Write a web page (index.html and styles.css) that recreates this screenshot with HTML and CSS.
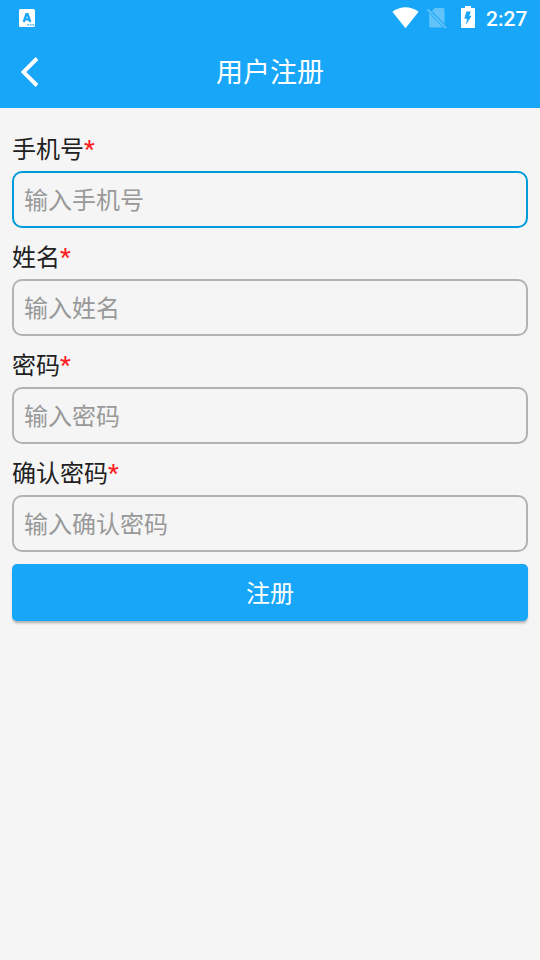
FILE: index.html
```html
<!DOCTYPE html>
<html lang="zh-CN">
<head>
<meta charset="utf-8">
<title>用户注册</title>
<link rel="stylesheet" href="styles.css">
</head>
<body>
<header class="top">
  <div class="status">
    <svg class="app-icon" width="16" height="18" viewBox="0 0 16 18">
      <rect width="16" height="18" rx="1.5" fill="#fff"/>
      <path d="M4.7 13 7.4 5.2H8.6L11.3 13M5.8 10.4h4.5" fill="none" stroke="#17a6f8" stroke-width="2.3"/>
      <path d="M8.3 15.2h1.6v1.4H8.3zM10.9 15.2h1.6v1.4h-1.6zM13.4 15.2H15v1.4h-1.6z" fill="#17a6f8"/>
    </svg>
    <svg class="wifi" width="27" height="22" viewBox="0 0 27 22">
      <path d="M13.5 21.2.4 4.7C8.2-1.3 18.8-1.3 26.6 4.7Z" fill="#fff"/>
    </svg>
    <svg class="sim" width="20" height="21" viewBox="0 0 20 21">
      <path d="M.7 1.5 19 20.2M7.5 0H16q1.5 0 1.5 1.5V16L5 3ZM2.2 5.3 16 19.5H4q-1.8 0-1.8-1.8Z" fill="#fff"/>
      <path d="M.7 1.5 19 20.2" stroke="#fff" stroke-width="1.8"/>
    </svg>
    <svg class="battery" width="14" height="22" viewBox="0 0 14 22">
      <path d="M4 0h6v2h3q1 0 1 1v18q0 1-1 1H1q-1 0-1-1V3q0-1 1-1h3Z" fill="#fff"/>
      <path d="M5.3 5.5H9.8L8.3 9.8H10.5L4.9 19 6.1 12.7H3.4Z" fill="#17a6f8"/>
    </svg>
    <span class="clock">2:27</span>
  </div>
  <div class="bar">
    <svg class="back" width="20" height="32" viewBox="0 0 20 32">
      <path d="M17 2.5 3.5 16 17 29.5" fill="none" stroke="#fff" stroke-width="3.9"/>
    </svg>
    <h1 class="title">用户注册</h1>
  </div>
</header>
<form class="form">
  <label class="label" for="phone">手机号<span class="req">*</span></label>
  <input class="input active" id="phone" type="tel" placeholder="输入手机号">
  <label class="label" for="name">姓名<span class="req">*</span></label>
  <input class="input" id="name" type="text" placeholder="输入姓名">
  <label class="label" for="password">密码<span class="req">*</span></label>
  <input class="input" id="password" type="password" placeholder="输入密码">
  <label class="label" for="confirm">确认密码<span class="req">*</span></label>
  <input class="input" id="confirm" type="password" placeholder="输入确认密码">
  <button class="submit" type="button">注册</button>
</form>
</body>
</html>
```
FILE: styles.css
```css
* {
  box-sizing: border-box;
}

body {
  margin: 0;
  min-height: 960px;
  background: #f5f5f5;
  color: #212121;
  font-family: Roboto, "Noto Sans CJK SC", sans-serif;
}

.top {
  height: 108px;
  background: #17a6f8;
  color: #fff;
}

.status {
  display: flex;
  align-items: flex-start;
  height: 36px;
  padding: 0 12px 0 19px;
}

.app-icon {
  margin-top: 9px;
}

.wifi {
  margin: 7px 0 0 auto;
}

.sim {
  margin: 8px 0 0 8px;
  opacity: 0.32;
}

.battery {
  margin: 6px 0 0 14px;
}

.clock {
  width: 42px;
  margin: 6px 0 0 11px;
  font-size: 21px;
  font-weight: 500;
  line-height: 26px;
  white-space: nowrap;
}

.bar {
  display: grid;
  grid-template-columns: 40px 1fr 40px;
  align-items: center;
  height: 72px;
}

.back {
  margin-left: 20px;
}

.title {
  margin: 0;
  padding-top: 2px;
  font-size: 27px;
  font-weight: 400;
  line-height: 40px;
  text-align: center;
}

.form {
  display: flex;
  flex-direction: column;
  padding: 12px;
}

.label {
  height: 51px;
  padding-top: 14px;
  font-size: 24px;
  line-height: 33px;
}

.req {
  color: #ff1f26;
  font-weight: 500;
  line-height: 1;
  vertical-align: 1px;
}

.input {
  height: 57px;
  margin: 0;
  padding: 2px 10px 0;
  border: 2px solid #b2b2b2;
  border-radius: 10px;
  outline: none;
  background: transparent;
  font-family: inherit;
  font-size: 24px;
}

.input::placeholder {
  color: #999;
}

.input.active {
  border-color: #009bdb;
}

.submit {
  height: 57px;
  margin: 12px 0 0;
  padding: 0 0 2px;
  border: 0;
  border-radius: 5px;
  background: #17a6f8;
  box-shadow: 0 3px 3px -1px rgba(0, 0, 0, 0.3);
  color: #fff;
  font-family: inherit;
  font-size: 24px;
}
```
